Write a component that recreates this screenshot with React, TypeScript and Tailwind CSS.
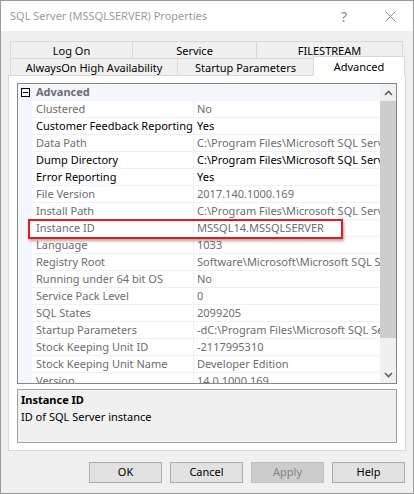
import React from 'react';

const rows: { name: string; value: string; edit?: boolean }[] = [
    { name: 'Clustered', value: 'No' },
    { name: 'Customer Feedback Reporting', value: 'Yes', edit: true },
    { name: 'Data Path', value: 'C:\\Program Files\\Microsoft SQL Server' },
    { name: 'Dump Directory', value: 'C:\\Program Files\\Microsoft SQL Server', edit: true },
    { name: 'Error Reporting', value: 'Yes', edit: true },
    { name: 'File Version', value: '2017.140.1000.169' },
    { name: 'Install Path', value: 'C:\\Program Files\\Microsoft SQL Server' },
    { name: 'Instance ID', value: 'MSSQL14.MSSQLSERVER' },
    { name: 'Language', value: '1033' },
    { name: 'Registry Root', value: 'Software\\Microsoft\\Microsoft SQL Server' },
    { name: 'Running under 64 bit OS', value: 'No' },
    { name: 'Service Pack Level', value: '0' },
    { name: 'SQL States', value: '2099205' },
    { name: 'Startup Parameters', value: '-dC:\\Program Files\\Microsoft SQL Server' },
    { name: 'Stock Keeping Unit ID', value: '-2117995310' },
    { name: 'Stock Keeping Unit Name', value: 'Developer Edition' },
    { name: 'Version', value: '14.0.1000.169' },
];

function Tab({ label, w, selected }: { label: string; w: string; selected?: boolean }) {
    return (
        <div
            className={`${w} flex items-center justify-center border border-[#d9d9d9] -ml-px first:ml-0 ${
                selected ? 'bg-white h-[20px] -mt-[2px] border-b-0 relative z-10' : 'bg-[#f0f0f0] h-[18px]'
            }`}
        >
            {label}
        </div>
    );
}

function Chevron({ up }: { up?: boolean }) {
    return (
        <svg width="9" height="6" viewBox="0 0 9 6">
            <path d={up ? 'M1 5 L4.5 1.5 L8 5' : 'M1 1 L4.5 4.5 L8 1'} fill="none" stroke="#606060" strokeWidth="1.6" />
        </svg>
    );
}

export default function App() {
    return (
        <div
            className="w-[414px] h-[494px] border border-[#9a9a9a] flex flex-col bg-[#f0f0f0] text-[11px] text-black"
            style={{ fontFamily: '"Noto Sans", "Open Sans", sans-serif' }}
        >
            <div className="h-[30px] bg-white flex items-center pl-[9px] text-[#9b9b9b] text-[11px] shrink-0">
                <span className="flex-1">SQL Server (MSSQLSERVER) Properties</span>
                <span className="w-[46px] text-center text-[14px] text-[#8a8a8a]">?</span>
                <span className="w-[46px] flex justify-center">
                    <svg width="11" height="11" viewBox="0 0 11 11">
                        <path d="M0.5 0.5 L10.5 10.5 M10.5 0.5 L0.5 10.5" stroke="#8a8a8a" strokeWidth="1" />
                    </svg>
                </span>
            </div>

            <div className="flex-1 flex flex-col px-[7px] pt-[10px]">
                <div className="pl-[2px] leading-none">
                    <div className="flex">
                        <Tab label="Log On" w="w-[123px]" />
                        <Tab label="Service" w="w-[125px]" />
                        <Tab label="FILESTREAM" w="w-[147px]" />
                    </div>
                    <div className="flex -mt-px">
                        <Tab label="AlwaysOn High Availability" w="w-[168px]" />
                        <Tab label="Startup Parameters" w="w-[137px]" />
                        <Tab label="Advanced" w="w-[92px]" selected />
                    </div>
                </div>

                <div className="w-[398px] h-[376px] bg-white border border-[#d9d9d9] -mt-px px-[8px] pt-[7px] flex flex-col">
                    <div className="h-[301px] border border-[#828790] flex relative overflow-hidden">
                        <div className="flex-1 min-w-0 flex flex-col">
                            <div className="h-[17px] bg-[#f3f6fb] flex items-center shrink-0">
                                <div className="w-[14px] flex justify-center">
                                    <div className="w-[9px] h-[9px] border border-black flex items-center justify-center">
                                        <div className="w-[5px] h-px bg-black" />
                                    </div>
                                </div>
                                <span className="pl-[4px] font-bold text-[#6d6d6d]">Advanced</span>
                            </div>
                            {rows.map((r) => (
                                <div key={r.name} className="h-[17px] flex shrink-0 min-w-0">
                                    <div className="w-[14px] shrink-0 bg-[#f3f6fb]" />
                                    <div
                                        className={`w-[162px] shrink-0 border-b border-r border-[#eef1f5] pl-[4px] flex items-center whitespace-nowrap overflow-hidden ${
                                            r.edit ? 'text-black' : 'text-[#6d6d6d]'
                                        }`}
                                    >
                                        {r.name}
                                    </div>
                                    <div
                                        className={`flex-1 min-w-0 border-b border-[#eef1f5] pl-[3px] flex items-center whitespace-nowrap overflow-hidden ${
                                            r.edit ? 'text-black' : 'text-[#6d6d6d]'
                                        }`}
                                    >
                                        {r.value}
                                    </div>
                                </div>
                            ))}
                        </div>
                        <div className="w-[16px] shrink-0 bg-[#f0f0f0] flex flex-col">
                            <div className="h-[17px] flex items-center justify-center shrink-0">
                                <Chevron up />
                            </div>
                            <div className="h-[237px] bg-[#cdcdcd]" />
                            <div className="flex-1" />
                            <div className="h-[17px] flex items-center justify-center shrink-0">
                                <Chevron />
                            </div>
                        </div>
                        <div className="absolute left-[10px] top-[135px] w-[315px] h-[20px] border-2 border-[#e31b1b] shadow-[1px_2px_3px_rgba(0,0,0,0.35)]" />
                    </div>

                    <div className="mt-[5px] h-[54px] border border-[#a0a0a0] bg-[#f0f0f0] px-[3px] pt-[1px] leading-[17px]">
                        <div className="font-bold">Instance ID</div>
                        <div>ID of SQL Server instance</div>
                    </div>
                </div>

                <div className="flex justify-end gap-[8px] mt-[11px] pr-px">
                    {['OK', 'Cancel', 'Apply', 'Help'].map((b) => (
                        <div
                            key={b}
                            className={`w-[73px] h-[21px] border flex items-center justify-center ${
                                b === 'Apply'
                                    ? 'bg-[#cccccc] border-[#bfbfbf] text-[#838383]'
                                    : 'bg-[#e1e1e1] border-[#adadad]'
                            }`}
                        >
                            {b}
                        </div>
                    ))}
                </div>
            </div>
        </div>
    );
}
